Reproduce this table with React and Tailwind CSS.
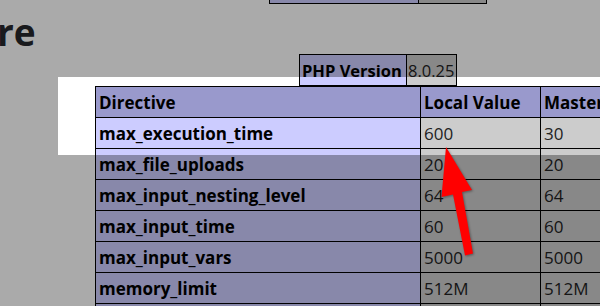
import React from 'react';

const rows = [
    { name: 'max_execution_time', local: '600', master: '30' },
    { name: 'max_file_uploads', local: '20', master: '20' },
    { name: 'max_input_nesting_level', local: '64', master: '64' },
    { name: 'max_input_time', local: '60', master: '60' },
    { name: 'max_input_vars', local: '5000', master: '5000' },
    { name: 'memory_limit', local: '512M', master: '512M' },
    { name: 'open_basedir', local: 'no value', master: 'no value' },
];

const App = () => {
    return (
        <div className="relative w-[600px] h-[306px] overflow-hidden bg-white font-['Open_Sans',sans-serif] text-black">
            {/* tail of the table above */}
            <div className="ml-[269px] -mt-[28px] flex w-[218px] h-[32px] border border-black">
                <div className="w-[149px] bg-[#ccccff] border-r border-black" />
                <div className="flex-1 bg-[#cccccc]" />
            </div>

            <h1 className="-ml-[3px] mt-[6px] h-[44px] text-[37px] leading-[44px] font-bold text-[#26282c]">re</h1>

            <div className="ml-[299px] flex w-[158px] h-[32px] border border-black text-[16.5px]">
                <div className="w-[107px] bg-[#ccccff] border-r border-black font-bold flex items-center pl-[2px] pt-[2px]">PHP Version</div>
                <div className="flex-1 bg-[#cccccc] text-[#222] flex items-center pl-[1px] pt-[2px]">8.0.25</div>
            </div>

            <table className="ml-[95px] table-fixed border-collapse text-[17px] w-[565px]">
                <colgroup>
                    <col className="w-[325px]" />
                    <col className="w-[120px]" />
                    <col className="w-[120px]" />
                </colgroup>
                <thead>
                    <tr className="bg-[#9999cc]">
                        <th className="h-[31px] border border-black px-[3px] pt-[2px] text-left font-bold">Directive</th>
                        <th className="h-[31px] border border-black px-[3px] pt-[2px] text-left font-bold">Local Value</th>
                        <th className="h-[31px] border border-black px-[3px] pt-[2px] text-left font-bold">Master Value</th>
                    </tr>
                </thead>
                <tbody>
                    {rows.map((r) => (
                        <tr key={r.name}>
                            <td className="h-[31px] border border-black px-[3px] pt-[2px] bg-[#ccccff] font-bold">{r.name}</td>
                            <td className="h-[31px] border border-black px-[3px] pt-[2px] bg-[#cccccc] text-[#222]">{r.local}</td>
                            <td className="h-[31px] border border-black px-[3px] pt-[2px] bg-[#cccccc] text-[#222]">{r.master}</td>
                        </tr>
                    ))}
                </tbody>
            </table>

            {/* spotlight: dims everything outside the box */}
            <div className="absolute left-[58px] top-[77px] w-[542px] h-[78px] shadow-[0_0_0_9999px_rgba(0,0,0,0.333)] pointer-events-none" />

            <svg className="absolute left-0 top-0 pointer-events-none drop-shadow-[1px_1px_1px_rgba(0,0,0,0.35)]" width="600" height="306" viewBox="0 0 600 306">
                <polygon
                    points="446,147 441.5,197 453,194.5 465,255.5 473,253.5 462,192 472,190"
                    fill="#ff0000"
                />
            </svg>
        </div>
    );
};

export default App;
